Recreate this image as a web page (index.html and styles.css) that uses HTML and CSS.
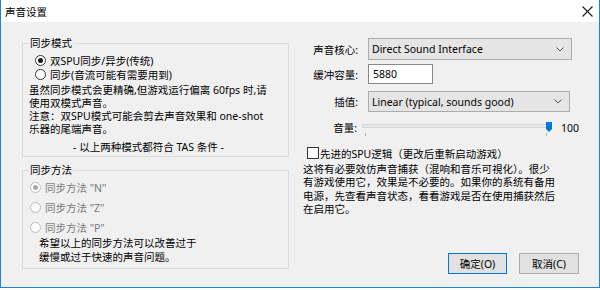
FILE: index.html
```html
<!DOCTYPE html>
<html>
<head>
<title>声音设置</title>
<link rel="stylesheet" href="styles.css">
</head>
<body>
<div class="window">
    <div class="titlebar">
        <span class="title">声音设置</span>
        <svg class="close" width="11" height="11" viewBox="0 0 11 11"><path d="M0.5 0.5L10.5 10.5M10.5 0.5L0.5 10.5" stroke="#1a1a1a" stroke-width="1.1" fill="none"/></svg>
    </div>
    <div class="content">
        <div class="left">
            <fieldset class="group mode">
                <legend>同步模式</legend>
                <div class="radio"><span class="circle checked"></span>双SPU同步/异步(传统)</div>
                <div class="radio"><span class="circle"></span>同步(音流可能有需要用到)</div>
                <p class="note">虽然同步模式会更精确,但游戏运行偏离 60fps 时,请<br>使用双模式声音。<br>注意：双SPU模式可能会剪去声音效果和 one-shot<br>乐器的尾端声音。</p>
                <p class="tas">- 以上两种模式都符合 TAS 条件 -</p>
            </fieldset>
            <fieldset class="group method">
                <legend>同步方法</legend>
                <div class="radio disabled"><span class="circle checked"></span>同步方法 "N"</div>
                <div class="radio disabled"><span class="circle"></span>同步方法 "Z"</div>
                <div class="radio disabled"><span class="circle"></span>同步方法 "P"</div>
                <p class="hint">希望以上的同步方法可以改善过于<br>缓慢或过于快速的声音问题。</p>
            </fieldset>
        </div>
        <div class="right">
            <div class="row core">
                <span class="lbl">声音核心:</span>
                <div class="combo wide"><span>Direct Sound Interface</span><svg width="8" height="5" viewBox="0 0 8 5"><path d="M0.5 0.5L4 4L7.5 0.5" stroke="#555" fill="none"/></svg></div>
            </div>
            <div class="row buffer">
                <span class="lbl">缓冲容量:</span>
                <div class="textbox">5880</div>
            </div>
            <div class="row interp">
                <span class="lbl">插值:</span>
                <div class="combo"><span>Linear (typical, sounds good)</span><svg width="8" height="5" viewBox="0 0 8 5"><path d="M0.5 0.5L4 4L7.5 0.5" stroke="#555" fill="none"/></svg></div>
            </div>
            <div class="row volume">
                <span class="lbl">音量:</span>
                <div class="slider">
                    <div class="track"></div>
                    <div class="ticks"><i></i><i></i></div>
                    <svg class="thumb" width="6" height="10" viewBox="0 0 6 10"><path d="M0 0H6V7L3 10L0 7Z" fill="#0078d7"/></svg>
                </div>
                <span class="value">100</span>
            </div>
            <div class="check"><span class="box"></span>先进的SPU逻辑（更改后重新启动游戏）</div>
            <p class="desc">这将有必要效仿声音捕获（混响和音乐可視化）。很少<br>有游戏使用它，效果是不必要的。如果你的系统有备用<br>电源，先查看声音状态，看看游戏是否在使用捕获然后<br>在启用它。</p>
            <div class="buttons">
                <button type="button" class="btn default">确定(O)</button>
                <button type="button" class="btn cancel">取消(C)</button>
            </div>
        </div>
    </div>
</div>
</body>
</html>
```

FILE: styles.css
```css
body {
    margin: 0;
    background-color: #fff;
    font-family: "Noto Sans", "Noto Sans CJK SC", sans-serif;
    font-size: 10.5px;
    color: #000;
}
p {
    margin: 0;
}
.window {
    width: 600px;
    height: 288px;
    box-sizing: border-box;
    border: 1px solid #1883d7;
    border-top: 0;
    background-color: #f0f0f0;
    display: flex;
    flex-direction: column;
}
.titlebar {
    height: 22px;
    background-color: #fff;
    display: flex;
    align-items: center;
    justify-content: space-between;
    padding: 1px 6px 0 4px;
    box-sizing: border-box;
}
.content {
    display: flex;
    padding: 14px 0 0 21px;
}
.left {
    width: 267px;
    display: flex;
    flex-direction: column;
}
.group {
    margin: 0;
    min-width: 0;
    border: 1px solid #dcdcdc;
    padding: 3px 0 2px 6px;
}
.group legend {
    padding: 0 1px;
    line-height: 14px;
}
.radio {
    display: flex;
    align-items: center;
    height: 14px;
}
.circle {
    width: 11px;
    height: 11px;
    box-sizing: border-box;
    border: 1px solid #333;
    border-radius: 50%;
    background-color: #fff;
    margin: 0 4px 0 6px;
    display: flex;
    align-items: center;
    justify-content: center;
}
.circle.checked::after {
    content: "";
    width: 5px;
    height: 5px;
    border-radius: 50%;
    background-color: #1a1a1a;
}
.note {
    margin-top: 3px;
    line-height: 13px;
}
.tas {
    margin-top: 4px;
    line-height: 14px;
    text-align: center;
    padding-right: 20px;
}
.method {
    margin-top: 6px;
    padding: 0 0 4px 6px;
}
.method .radio {
    height: 20px;
}
.radio.disabled {
    color: #7a7a7a;
}
.radio.disabled .circle {
    border-color: #bcbcbc;
    background-color: #fcfcfc;
    margin-left: 1px;
}
.radio.disabled .circle.checked::after {
    background-color: #a8a8a8;
}
.hint {
    margin-left: 10px;
    line-height: 13.5px;
}
.right {
    width: 276px;
    margin-left: 14px;
    padding-top: 2px;
    display: flex;
    flex-direction: column;
}
.row {
    display: flex;
    align-items: center;
}
.lbl {
    width: 55px;
    text-align: right;
    margin-right: 10px;
}
.combo {
    width: 202px;
    height: 21px;
    box-sizing: border-box;
    border: 1px solid #acacac;
    background-color: #e5e5e5;
    display: flex;
    align-items: center;
    justify-content: space-between;
    padding: 0 7px 0 3px;
}
.combo.wide {
    width: 204px;
    height: 22px;
}
.buffer {
    margin-top: 4px;
}
.textbox {
    width: 65px;
    height: 20px;
    box-sizing: border-box;
    border: 1px solid #8a8a8a;
    background-color: #fff;
    padding: 0 4px;
    line-height: 18px;
}
.interp {
    margin-top: 7px;
}
.volume {
    margin-top: 7px;
    height: 17px;
}
.volume .lbl {
    margin-right: 5px;
}
.slider {
    position: relative;
    width: 190px;
    height: 17px;
}
.track {
    width: 185px;
    height: 4px;
    margin-top: 5px;
    box-sizing: border-box;
    border: 1px solid #d6d6d6;
    background-color: #e7eaea;
}
.ticks {
    width: 185px;
    display: flex;
    justify-content: space-between;
    padding: 0 0 0 3px;
    margin-top: 5px;
    box-sizing: border-box;
}
.ticks i {
    width: 1px;
    height: 3px;
    background-color: #b0b0b0;
}
.thumb {
    position: absolute;
    left: 184px;
    top: 3px;
}
.value {
    margin-left: 12px;
}
.check {
    display: flex;
    align-items: center;
    height: 14px;
    margin-top: 10px;
}
.box {
    width: 12px;
    height: 12px;
    box-sizing: border-box;
    border: 1px solid #333;
    background-color: #fff;
    margin: 0 1px 0 4px;
}
.desc {
    margin-top: 3px;
    line-height: 13.4px;
}
.buttons {
    display: flex;
    justify-content: flex-end;
    gap: 12px;
    margin-top: 36px;
}
.btn {
    height: 21px;
    padding: 0;
    font-family: inherit;
    font-size: 10.5px;
    color: #000;
    background-color: #e1e1e1;
    border: 1px solid #adadad;
}
.btn.default {
    width: 59px;
    border-color: #0078d7;
}
.btn.cancel {
    width: 60px;
}
```
